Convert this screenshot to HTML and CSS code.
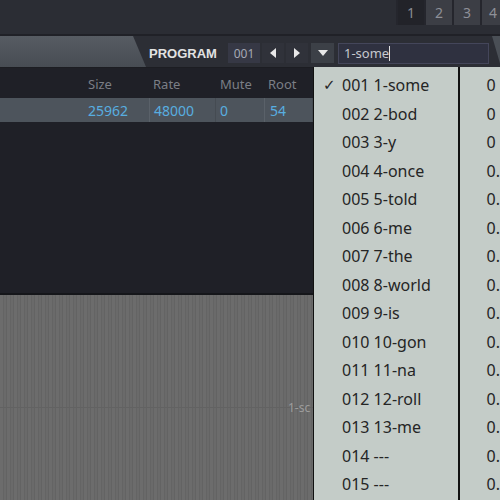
FILE: index.html
```html
<!DOCTYPE html>
<html>
<head>
<meta charset="utf-8">
<link rel="stylesheet" href="styles.css">
</head>
<body>
<div class="app">
  <div class="top">
    <div class="tabs">
      <div class="tab active">1</div>
      <div class="tab">2</div>
      <div class="tab">3</div>
      <div class="tab">4</div>
    </div>
  </div>
  <div class="toolbar">
    <div class="lefttab"></div>
    <div class="label">PROGRAM</div>
    <div class="num">001</div>
    <div class="btn"><svg width="8" height="12" viewBox="0 0 8 12"><path d="M7 1 L1 6 L7 11 Z" fill="#e8e8e8"/></svg></div>
    <div class="btn"><svg width="8" height="12" viewBox="0 0 8 12"><path d="M1 1 L7 6 L1 11 Z" fill="#e8e8e8"/></svg></div>
    <div class="btn drop"><svg width="12" height="8" viewBox="0 0 12 8"><path d="M1 1 L11 1 L6 7 Z" fill="#e8e8e8"/></svg></div>
    <div class="input"><span>1-some</span><i class="caret"></i></div>
    <div class="righttab"></div>
  </div>
  <div class="panel">
    <div class="thead">
      <div class="c c-size">Size</div>
      <div class="c c-rate">Rate</div>
      <div class="c c-mute">Mute</div>
      <div class="c c-root">Root</div>
    </div>
    <div class="trow">
      <div class="c c-size">25962</div>
      <div class="c c-rate cell">48000</div>
      <div class="c c-mute">0</div>
      <div class="c c-root cell">54</div>
    </div>
  </div>
  <div class="wave">
    <div class="wave-label">1-sc</div>
  </div>

  <div class="menu">
    <div class="list">
      <div class="item"><span class="chk">✓</span>001 1-some</div>
      <div class="item"><span class="chk"></span>002 2-bod</div>
      <div class="item"><span class="chk"></span>003 3-y</div>
      <div class="item"><span class="chk"></span>004 4-once</div>
      <div class="item"><span class="chk"></span>005 5-told</div>
      <div class="item"><span class="chk"></span>006 6-me</div>
      <div class="item"><span class="chk"></span>007 7-the</div>
      <div class="item"><span class="chk"></span>008 8-world</div>
      <div class="item"><span class="chk"></span>009 9-is</div>
      <div class="item"><span class="chk"></span>010 10-gon</div>
      <div class="item"><span class="chk"></span>011 11-na</div>
      <div class="item"><span class="chk"></span>012 12-roll</div>
      <div class="item"><span class="chk"></span>013 13-me</div>
      <div class="item"><span class="chk"></span>014 ---</div>
      <div class="item"><span class="chk"></span>015 ---</div>
    </div>
    <div class="list2">
      <div class="item2">0</div>
      <div class="item2">0</div>
      <div class="item2">0</div>
      <div class="item2">0.</div>
      <div class="item2">0.</div>
      <div class="item2">0.</div>
      <div class="item2">0.</div>
      <div class="item2">0.</div>
      <div class="item2">0.</div>
      <div class="item2">0.</div>
      <div class="item2">0.</div>
      <div class="item2">0.</div>
      <div class="item2">0.</div>
      <div class="item2">0.</div>
      <div class="item2">0.</div>
    </div>
  </div>
</div>
</body>
</html>
```
FILE: styles.css
```css
html, body {
  margin: 0;
  padding: 0;
  width: 500px;
  height: 500px;
  overflow: hidden;
  background: #2a2c33;
  font-family: "Noto Sans", "Open Sans", sans-serif;
}
.app {
  position: relative;
  width: 500px;
  height: 500px;
  display: flex;
  flex-direction: column;
}
.top {
  height: 36px;
  background: #2b2d34;
  display: flex;
  justify-content: flex-end;
  align-items: flex-start;
  border-bottom: 2px solid #202127;
  box-sizing: border-box;
}
.tabs {
  display: flex;
  gap: 2px;
  padding-left: 2px;
  background: #25262d;
  height: 25px;
}
.tab {
  width: 26px;
  height: 25px;
  box-sizing: border-box;
  background: #3c3e45;
  color: #8e9098;
  font-size: 14px;
  display: flex;
  align-items: center;
  justify-content: center;
}
.tab.active {
  background: #222329;
  color: #8a8c94;
}
.tabs .tab:last-child { width: 18px; justify-content: flex-start; padding-left: 7px; }
.toolbar {
  height: 32px;
  background: #2c2e35;
  display: flex;
  align-items: center;
  padding-top: 3px;
  border-bottom: 1px solid #1c1d22;
  box-sizing: border-box;
}
.lefttab {
  width: 146px;
  height: 31px;
  align-self: flex-end;
  margin-top: -3px;
  background: linear-gradient(#575c63, #474c53);
  clip-path: polygon(0 0, 133px 0, 146px 100%, 0 100%);
}
.label {
  margin-left: 3px;
  color: #e2e2e2;
  font-family: "Liberation Sans", Arial, sans-serif;
  font-weight: bold;
  font-size: 13px;
  width: 79px;
}
.num {
  width: 32px;
  height: 20px;
  background: #363845;
  color: #a5a8b4;
  font-size: 12px;
  display: flex;
  align-items: center;
  justify-content: center;
  margin-right: 2px;
}
.btn {
  width: 22px;
  height: 20px;
  background: #30323a;
  display: flex;
  align-items: center;
  justify-content: center;
  margin-right: 2px;
}
.btn.drop {
  background: #3c4047;
  width: 23px;
  margin-left: 1px;
  margin-right: 4px;
}
.input {
  width: 151px;
  height: 21px;
  background: #2f3140;
  border: 1px solid #44465a;
  color: #c8c9cf;
  font-size: 13px;
  display: flex;
  align-items: center;
  padding-left: 5px;
  box-sizing: border-box;
}
.caret {
  display: inline-block;
  width: 1px;
  height: 15px;
  background: #e0e0e0;
}
.righttab {
  flex: 1;
  height: 31px;
  align-self: flex-end;
  margin-left: 3px;
  background: #4a4f56;
  clip-path: polygon(0 0, 100% 0, 100% 100%, 9px 100%);
}
.panel {
  height: 225px;
  background: #1f2027;
  border-bottom: 2px solid #15161a;
}
.thead, .trow {
  display: flex;
  align-items: center;
  font-size: 13px;
}
.thead { color: #7b7e86; height: 30px; padding-top: 2px; box-sizing: border-box; }
.trow {
  height: 24px;
  background: #4d545c;
  color: #58aee0;
  width: 313px;
  font-size: 14px;
}
.c { box-sizing: border-box; height: 100%; display: flex; align-items: center; }
.c-size { margin-left: 88px; width: 61px; }
.c-rate { width: 67px; padding-left: 4px; }
.c-mute { width: 48px; padding-left: 4px; }
.c-root { width: 49px; padding-left: 4px; }
.trow .cell { border-left: 1px solid #5a6169; border-right: 1px solid #454b52; }
.trow .c-root { padding-left: 5px; }
.wave {
  flex: 1;
  position: relative;
  background-color: #6a6a6a;
  background-image:
    linear-gradient(to bottom, transparent 112px, #626262 112px, #626262 113px, transparent 113px),
    repeating-linear-gradient(to right, #6c6c6c 0, #6c6c6c 3px, #646464 3px, #646464 4px, #6a6a6a 4px, #6a6a6a 6px, #636363 6px, #636363 7px);
}
.wave-label {
  position: absolute;
  left: 288px;
  top: 104px;
  font-size: 12px;
  color: #9c9c9c;
}
.menu {
  position: absolute;
  left: 313px;
  top: 67px;
  width: 187px;
  height: 433px;
  display: flex;
  background: #111;
}
.list {
  width: 147px;
  margin-left: 1px;
  background: #c4ccc8;
  padding-top: 4px;
  box-sizing: border-box;
}
.list2 {
  flex: 1;
  margin-left: 2px;
  background: #c4ccc8;
  padding-top: 4px;
  box-sizing: border-box;
  padding-left: 27px;
}
.item, .item2 {
  height: 28.5px;
  display: flex;
  align-items: center;
  font-size: 16px;
  color: #252525;
  white-space: nowrap;
}
.chk {
  width: 28px;
  padding-left: 9px;
  box-sizing: border-box;
  font-size: 15px;
  font-family: "DejaVu Sans", sans-serif;
}
```
